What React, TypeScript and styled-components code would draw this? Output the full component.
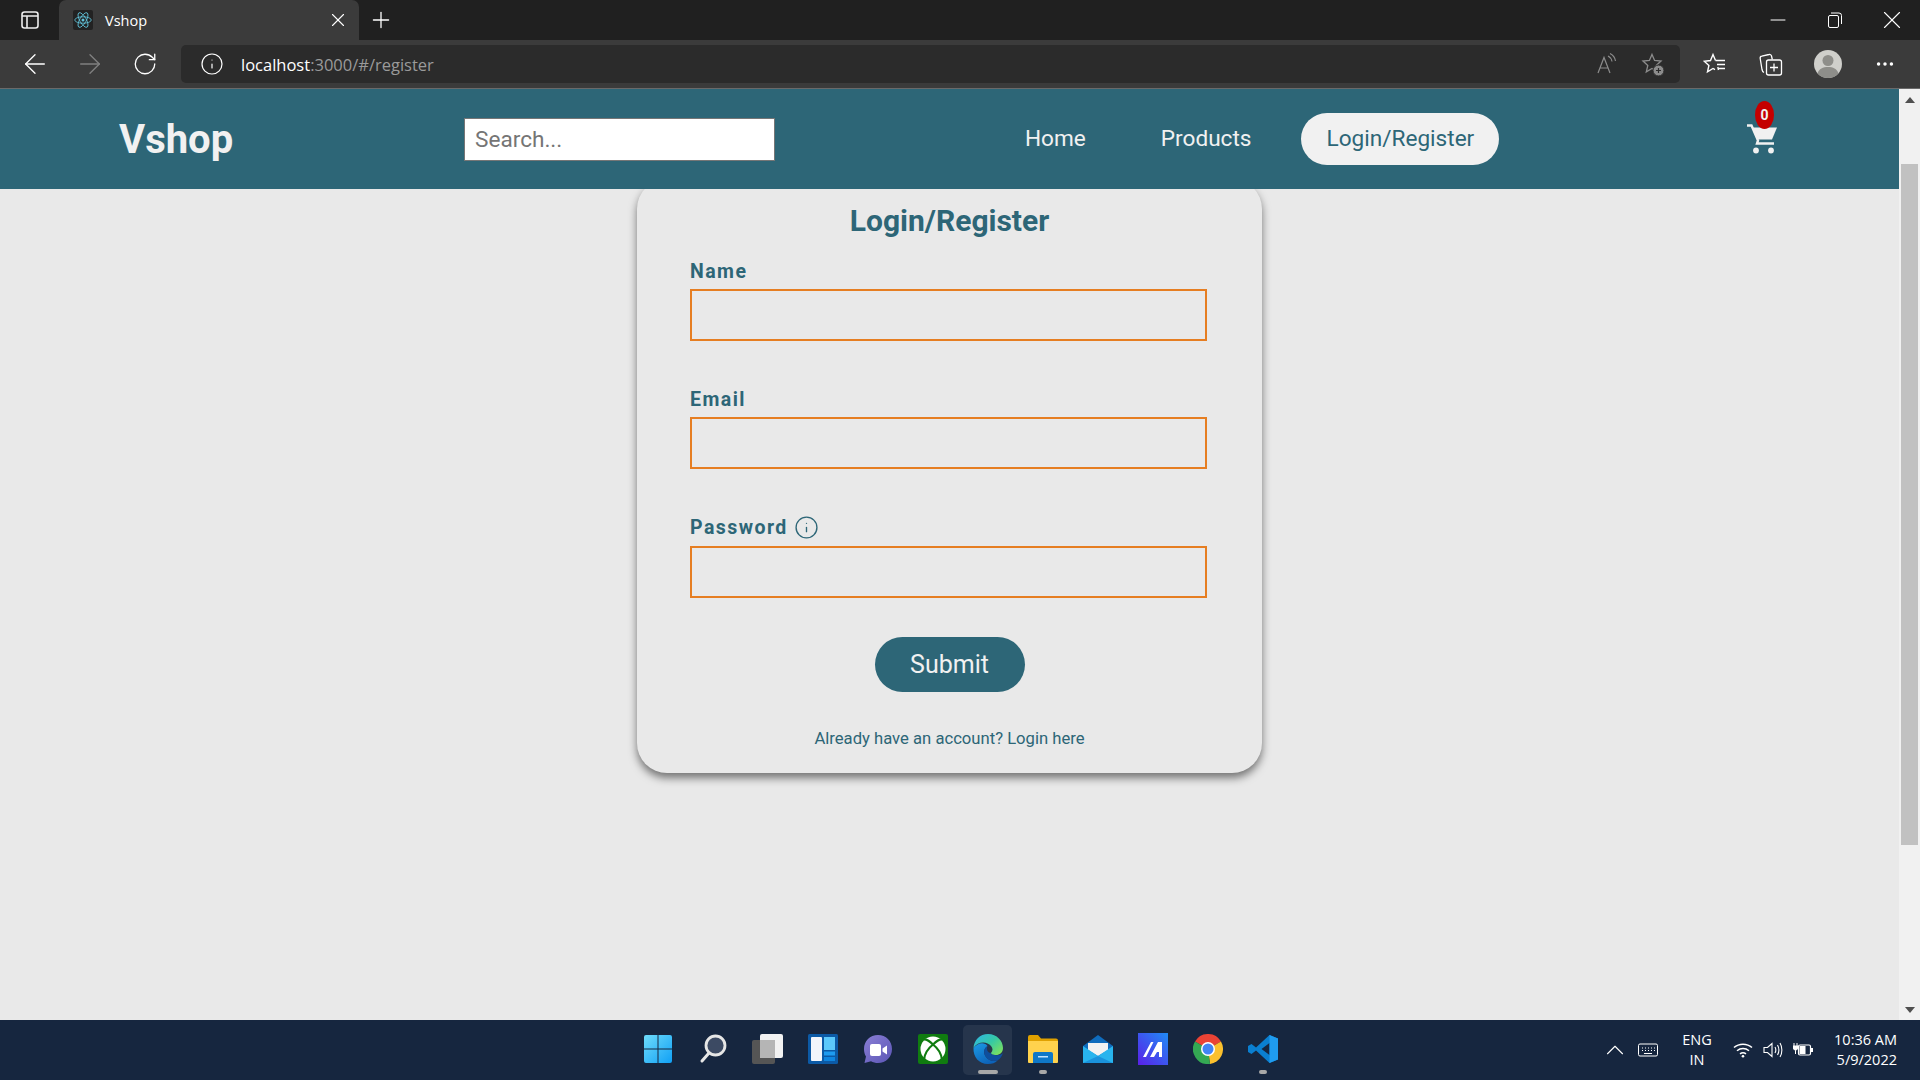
import React from "react";
import styled, { createGlobalStyle } from "styled-components";
import { ArrowLeft, ArrowRight, RotateCw, Info, X, Plus, Minus, ChevronUp, MoreHorizontal } from "lucide-react";

const GlobalStyle = createGlobalStyle`
  html, body {
    margin: 0;
    padding: 0;
    height: 100%;
    overflow: hidden;
    font-family: Roboto, "Liberation Sans", sans-serif;
  }
  * {
    box-sizing: border-box;
  }
`;

const Screen = styled.div`
  display: flex;
  flex-direction: column;
  width: 1920px;
  height: 1080px;
  overflow: hidden;
  background: #e9e9e9;
`;

// browser chrome
const TabStrip = styled.div`
  display: flex;
  align-items: stretch;
  height: 40px;
  flex-shrink: 0;
  background: #202020;
  color: #fff;
`;
const StripButton = styled.div<{ $width: number }>`
  display: flex;
  align-items: center;
  justify-content: center;
  width: ${(p) => p.$width}px;
  flex-shrink: 0;
`;
const Tab = styled.div`
  display: flex;
  align-items: center;
  width: 300px;
  padding: 0 10px 0 14px;
  background: #3b3b3b;
  border-radius: 7px 7px 0 0;
  font-family: "Open Sans", sans-serif;
  font-size: 14.5px;
`;
const TabTitle = styled.span`
  margin-left: 12px;
  flex: 1;
`;
const Favicon = styled.div`
  display: flex;
  align-items: center;
  justify-content: center;
  width: 20px;
  height: 20px;
  background: #222;
  border-radius: 2px;
`;
const StripSpacer = styled.div`
  flex: 1;
`;
const Toolbar = styled.div`
  display: flex;
  align-items: center;
  height: 49px;
  flex-shrink: 0;
  padding-left: 7px;
  background: #3b3b3b;
  border-bottom: 1px solid #6a6a6a;
  color: #fff;
`;
const ToolButton = styled.div<{ $width?: number; $dim?: boolean }>`
  display: flex;
  align-items: center;
  justify-content: center;
  width: ${(p) => p.$width ?? 55}px;
  flex-shrink: 0;
  color: ${(p) => (p.$dim ? "#808080" : "#fff")};
`;
const AddressBar = styled.div`
  display: flex;
  align-items: center;
  width: 1499px;
  height: 38px;
  margin: 0 7px 0 9px;
  padding: 0 5px 0 19px;
  background: #2b2b2b;
  border-radius: 5px;
  font-family: "Open Sans", sans-serif;
  font-size: 16.5px;
`;
const Host = styled.span`
  margin-left: 17px;
  color: #fff;
`;
const UrlRest = styled.span`
  flex: 1;
  color: #9a9a9a;
`;
const AddressIcon = styled.div`
  display: flex;
  justify-content: center;
  width: 45px;
  color: #8c8c8c;
`;

// page viewport
const Viewport = styled.div`
  display: flex;
  flex: 1;
  min-height: 0;
`;
const Page = styled.div`
  display: flex;
  flex-direction: column;
  flex: 1;
  min-width: 0;
`;
const Scrollbar = styled.div`
  display: flex;
  flex-direction: column;
  align-items: center;
  width: 21px;
  flex-shrink: 0;
  background: #f1f1f1;
`;
const ScrollArrow = styled.div<{ $down?: boolean }>`
  width: 0;
  height: 0;
  margin: ${(p) => (p.$down ? "auto 0 7px" : "8px 0 0")};
  border-left: 5px solid transparent;
  border-right: 5px solid transparent;
  border-${(p) => (p.$down ? "top" : "bottom")}: 6px solid #505050;
`;
const ScrollThumb = styled.div`
  width: 17px;
  height: 681px;
  margin-top: 61px;
  background: #c1c1c1;
`;

// app navbar
const Navbar = styled.nav`
  position: relative;
  z-index: 2;
  display: grid;
  grid-template-columns: 345px 536px 748px 1fr;
  align-items: center;
  height: 100px;
  flex-shrink: 0;
  padding-left: 119px;
  background: #2d6677;
`;
const Logo = styled.div`
  font-size: 40px;
  font-weight: 700;
  color: #f1f1f1;
`;
const SearchInput = styled.input`
  width: 311px;
  height: 43px;
  padding: 0 10px;
  border: 1px solid #767676;
  background: #fff;
  font-family: Roboto, sans-serif;
  font-size: 22.6px;
  outline: none;
  &::placeholder {
    color: #757575;
  }
`;
const NavLinks = styled.div`
  display: flex;
  gap: 25px;
`;
const NavLink = styled.a<{ $active?: boolean }>`
  padding: 0 25px;
  height: 52px;
  line-height: 52px;
  border-radius: 26px;
  font-size: 22.6px;
  color: ${(p) => (p.$active ? "#2d6677" : "#f1f1f1")};
  background: ${(p) => (p.$active ? "#f1f1f1" : "transparent")};
`;
const CartWrap = styled.div`
  position: relative;
  width: 30px;
  height: 30px;
  margin-left: -1px;
  color: #f1f1f1;
`;
const CartBadge = styled.span`
  position: absolute;
  top: -23px;
  left: 8px;
  width: 19px;
  height: 28px;
  border-radius: 50%;
  background: #c40000;
  color: #f1f1f1;
  font-size: 14px;
  font-weight: 700;
  line-height: 28px;
  text-align: center;
`;

// form card
const Card = styled.form`
  display: flex;
  flex-direction: column;
  align-self: center;
  width: 625px;
  margin-top: -10px;
  padding: 25px 53px 22px;
  background: #e9e9e9;
  border-radius: 30px;
  box-shadow: 0 5px 9px rgba(0, 0, 0, 0.5);
`;
const Title = styled.h2`
  margin: 0 0 21px;
  font-size: 30px;
  font-weight: 700;
  line-height: 34px;
  text-align: center;
  color: #2d6677;
`;
const Fields = styled.div`
  display: flex;
  flex-direction: column;
  gap: 46px;
`;
const Field = styled.div`
  display: flex;
  flex-direction: column;
`;
const Label = styled.label<{ $tall?: boolean }>`
  display: flex;
  align-items: center;
  gap: 6px;
  height: ${(p) => (p.$tall ? 25 : 24)}px;
  margin-bottom: 6px;
  font-size: 19.5px;
  font-weight: 700;
  letter-spacing: 1.45px;
  color: #2d6677;
`;
const TextInput = styled.input`
  width: 517px;
  height: 52px;
  padding: 0 10px;
  border: 2px solid #e67e22;
  background: transparent;
  outline: none;
`;
const SubmitButton = styled.button`
  align-self: center;
  width: 150px;
  height: 55px;
  margin-top: 39px;
  border: none;
  border-radius: 28px;
  background: #2d6677;
  color: #f1f1f1;
  font-family: Roboto, sans-serif;
  font-size: 25px;
`;
const Footnote = styled.p`
  margin: 35px 0 0;
  font-size: 16.65px;
  line-height: 24px;
  text-align: center;
  color: #2d6677;
`;

// windows taskbar
const Taskbar = styled.div`
  display: grid;
  grid-template-columns: 1fr auto 1fr;
  align-items: center;
  height: 60px;
  flex-shrink: 0;
  background: #16263f;
  color: #fff;
`;
const TaskIcons = styled.div`
  display: flex;
  grid-column: 2;
`;
const TaskIcon = styled.div<{ $active?: boolean }>`
  position: relative;
  display: flex;
  align-items: center;
  justify-content: center;
  width: 55px;
  height: 50px;
  border-radius: 5px;
  &::before {
    content: "";
    position: absolute;
    inset: 0 3px;
    border-radius: 5px;
    background: ${(p) => (p.$active ? "rgba(255,255,255,0.07)" : "transparent")};
  }
  & > svg {
    position: relative;
    margin-bottom: 2px;
  }
`;
const RunDot = styled.span<{ $wide?: boolean }>`
  position: absolute;
  bottom: 1px;
  left: 50%;
  width: ${(p) => (p.$wide ? 20 : 8)}px;
  height: 4px;
  margin-left: ${(p) => (p.$wide ? -10 : -4)}px;
  border-radius: 2px;
  background: #a8a8a8;
`;
const Tray = styled.div`
  display: flex;
  align-items: center;
  justify-content: flex-end;
  padding-right: 23px;
  font-family: "Open Sans", sans-serif;
  font-size: 14.5px;
`;
const TrayIcon = styled.div<{ $width: number }>`
  display: flex;
  justify-content: center;
  width: ${(p) => p.$width}px;
`;
const Lang = styled.div`
  width: 62px;
  line-height: 20px;
  text-align: center;
`;
const Clock = styled.div`
  width: 78px;
  margin-left: 1px;
  line-height: 20px;
  text-align: right;
  white-space: nowrap;
`;

const ReactLogo = () => (
  <svg width="18" height="18" viewBox="-12 -12 24 24" fill="none" stroke="#61c3da" strokeWidth="1.1">
    <circle r="2" fill="#61c3da" stroke="none" />
    <ellipse rx="11" ry="4.3" />
    <ellipse rx="11" ry="4.3" transform="rotate(60)" />
    <ellipse rx="11" ry="4.3" transform="rotate(120)" />
  </svg>
);

const SidebarIcon = () => (
  <svg width="20" height="20" viewBox="0 0 20 20" fill="none" stroke="#eee" strokeWidth="1.6">
    <rect x="2" y="2" width="16" height="16" rx="2.5" />
    <path d="M2 6h16M7 6v12" />
  </svg>
);

const RestoreIcon = () => (
  <svg width="14" height="16" viewBox="0 0 14 16" fill="none" stroke="#fff" strokeWidth="1">
    <rect x="0.5" y="3.5" width="10" height="12" rx="1.5" />
    <path d="M3 1h8a2.5 2.5 0 0 1 2.5 2.5V12" />
  </svg>
);

const ReadAloudIcon = () => (
  <svg width="22" height="22" viewBox="0 0 22 22" fill="none" stroke="#8c8c8c" strokeWidth="1.2">
    <path d="M1 20 7 4.500 13 20M3 15h8" />
    <path d="M11 3c2 1 3.500 3 4 5.500M13 0.500c3 1.500 5 4 5.500 7.500" />
  </svg>
);

const FavAddIcon = () => (
  <svg width="24" height="24" viewBox="0 0 24 24" fill="none" stroke="#8c8c8c" strokeWidth="1.3">
    <path d="M11 2.500 13.600 8.500 20 9.100 15.200 13.400 16.700 19.800 11 16.400 5.300 19.800 6.800 13.400 2 9.100 8.400 8.500Z" />
    <circle cx="17.500" cy="18.500" r="5.500" fill="#8c8c8c" stroke="#2b2b2b" strokeWidth="1" />
    <path d="M17.500 16v5M15 18.500h5" stroke="#2b2b2b" strokeWidth="1.200" />
  </svg>
);

const FavoritesIcon = () => (
  <svg width="24" height="24" viewBox="0 0 24 24" fill="none" stroke="#fff" strokeWidth="1.4">
    <path d="M12.500 8.500 10 2.500 7.500 8.500 1.200 9.200 5.900 13.400 4.500 19.800 10 16.500 12 17.700" />
    <path d="M12.500 8.500H22M14 12.500h8M14.500 16.500h7.500M14.800 15l.7 3" />
  </svg>
);

const CollectionsIcon = () => (
  <svg width="24" height="26" viewBox="0 0 24 26" fill="none" stroke="#fff" strokeWidth="1.3">
    <path d="M5 21.500C3.500 21 3.200 19.500 3 18.500L1.200 7.500A2 2 0 0 1 2.800 5.200L10 3.500a2 2 0 0 1 2.500 1.500l.8 3.500" />
    <rect x="7.500" y="9" width="15" height="15" rx="2" />
    <path d="M15 12.500v8M11 16.500h8" />
  </svg>
);

const ProfileIcon = () => (
  <svg width="28" height="34" viewBox="0 0 28 28">
    <circle cx="14" cy="14" r="14" fill="#cfcfcb" />
    <circle cx="14" cy="10.500" r="5.500" fill="#8e8e8a" />
    <path d="M3.500 23.500C5 18.500 9 17 14 17s9 1.500 10.500 6.500A14 14 0 0 1 14 28a14 14 0 0 1-10.500-4.500z" fill="#8e8e8a" />
  </svg>
);

const CartIcon = () => (
  <svg width="30" height="30" viewBox="0 0 30 30" fill="currentColor">
    <path d="M6 3.500H30L25 15.500H10Z" />
    <path d="M0 1.500H4.500L11 16.500 10 19.500H27" fill="none" stroke="currentColor" strokeWidth="2.400" />
    <circle cx="9" cy="26.500" r="2.900" />
    <circle cx="24" cy="26.500" r="2.900" />
  </svg>
);

const WindowsIcon = () => (
  <svg width="30" height="30" viewBox="0 0 30 30">
    <defs>
      <linearGradient id="win" x1="0" y1="0" x2="1" y2="1">
        <stop offset="0" stopColor="#6fdcfb" />
        <stop offset="1" stopColor="#10a0f5" />
      </linearGradient>
    </defs>
    <path d="M1 3a2 2 0 0 1 2-2h11.500v13.500H1zM15.500 1H27a2 2 0 0 1 2 2v11.500H15.500zM1 15.500h13.500V29H3a2 2 0 0 1-2-2zM15.500 15.500H29V27a2 2 0 0 1-2 2H15.500z" fill="url(#win)" />
  </svg>
);

const SearchGlassIcon = () => (
  <svg width="28" height="30" viewBox="0 0 28 30" fill="none">
    <circle cx="16.500" cy="11.500" r="9.500" fill="#3c4a63" stroke="#e6e6e6" strokeWidth="2.800" />
    <path d="M10 19 3 27" stroke="#e6e6e6" strokeWidth="3" strokeLinecap="round" />
  </svg>
);

const TaskViewIcon = () => (
  <svg width="32" height="30" viewBox="0 0 32 30">
    <rect x="0" y="6" width="23" height="24" rx="2" fill="#555" />
    <rect x="8" y="0" width="23" height="24" rx="2" fill="#f2f2f2" />
    <rect x="8" y="6" width="15" height="18" fill="#b5b5b5" />
  </svg>
);

const WidgetsIcon = () => (
  <svg width="30" height="30" viewBox="0 0 30 30">
    <rect width="30" height="30" rx="1.500" fill="#0c5aa6" />
    <rect x="3" y="3" width="11" height="24" rx="1" fill="#f2f6fb" />
    <rect x="16" y="3" width="11" height="13" fill="#5cc9fb" />
    <rect x="16" y="17.500" width="11" height="4" fill="#1e9cf0" />
    <rect x="16" y="23" width="11" height="4" fill="#0f86e0" />
  </svg>
);

const ChatIcon = () => (
  <svg width="30" height="30" viewBox="0 0 30 30">
    <defs>
      <linearGradient id="chat" x1="0" y1="0" x2="1" y2="1">
        <stop offset="0" stopColor="#8a7fd6" />
        <stop offset="1" stopColor="#5b55b5" />
      </linearGradient>
    </defs>
    <path d="M15 1C7 1 1 7 1 15c0 3 .8 5.500 2 7.500L1.500 29 8 27.200c2 1 4.500 1.800 7 1.800 8 0 14-6 14-14S23 1 15 1z" fill="url(#chat)" />
    <rect x="7" y="10" width="11" height="12" rx="2" fill="#fff" />
    <path d="M19.500 14.500 24 11.500v9l-4.500-3z" fill="#fff" />
  </svg>
);

const XboxIcon = () => (
  <svg width="30" height="30" viewBox="0 0 30 30">
    <rect width="30" height="30" rx="2" fill="#107c10" />
    <circle cx="15" cy="15" r="12.500" fill="#fff" />
    <g fill="none" stroke="#107c10" strokeWidth="2.200">
      <path d="M15 10.500C12 7.500 8.500 4.500 5 5.500" />
      <path d="M15 10.500C18 7.500 21.500 4.500 25 5.500" />
      <path d="M15 10.500C10.500 14 6.500 20 6 26" />
      <path d="M15 10.500C19.500 14 23.500 20 24 26" />
    </g>
  </svg>
);

const EdgeIcon = () => (
  <svg width="30" height="30" viewBox="0 0 30 30">
    <defs>
      <linearGradient id="edgeA" x1="0" y1="0" x2="1" y2="0.8">
        <stop offset="0" stopColor="#2fb4ea" />
        <stop offset="0.55" stopColor="#35c9a5" />
        <stop offset="1" stopColor="#7be05f" />
      </linearGradient>
      <linearGradient id="edgeB" x1="0" y1="0" x2="0.6" y2="1">
        <stop offset="0" stopColor="#1c9be6" />
        <stop offset="1" stopColor="#0d62b8" />
      </linearGradient>
    </defs>
    <path d="M0.500 14C1 6 7 0 15 0 24 0 30 7 30 14 30 19 26 21.500 22 21 19 21 18 20 18 19 20 17 20 14 18 12 14 7 5 7 0.500 14Z" fill="url(#edgeA)" />
    <path d="M0.500 14C5 8 12 8 14.500 12 11 14 10 19 13 23 16 27 21 28 25 26 22 29 19 30 15 30 6 30 0 23 0.500 14Z" fill="url(#edgeB)" />
    <path d="M14.500 12C11 14 10 19 13 23 16 27 21 28 25 26 27 25 29 22 30 19 28 21 25 21.500 22 21 19 21 18 20 18 19 15 19 13 16 14.500 12Z" fill="#0e4f9e" />
  </svg>
);

const ExplorerIcon = () => (
  <svg width="30" height="30" viewBox="0 0 30 30">
    <path d="M0 3a2 2 0 0 1 2-2h8l3 3.500h15a2 2 0 0 1 2 2V10H0z" fill="#e0a100" />
    <path d="M0 7h30v21a1 1 0 0 1-1 1H1a1 1 0 0 1-1-1z" fill="#ffd24d" />
    <path d="M5 20a2 2 0 0 1 2-2h16a2 2 0 0 1 2 2v9H5z" fill="#0f78c8" />
    <rect x="10" y="22" width="10" height="1.500" fill="#bfe3ff" />
  </svg>
);

const MailIcon = () => (
  <svg width="30" height="30" viewBox="0 0 30 30">
    <path d="M15 1 30 12v17H0V12z" fill="#0f6cbd" />
    <path d="M5 9h20v7l-10 6-10-6z" fill="#f2f2f2" />
    <path d="M0 12 15 22l15-10v17H0z" fill="#28b4ee" />
    <path d="M0 29 15 22l15 7z" fill="#1a92dc" />
  </svg>
);

const AppAIcon = () => (
  <svg width="30" height="32" viewBox="0 0 30 32">
    <defs>
      <linearGradient id="appA" x1="0" y1="1" x2="1" y2="0">
        <stop offset="0" stopColor="#5a1fe8" />
        <stop offset="1" stopColor="#1f8cf5" />
      </linearGradient>
    </defs>
    <rect width="30" height="32" fill="url(#appA)" />
    <path d="M5 24 13 9h2.500L8 24zM12 24 20 9h4v15h-3v-5h-2l-3 5z" fill="#fff" />
  </svg>
);

const ChromeIcon = () => (
  <svg width="30" height="30" viewBox="-15 -15 30 30">
    <path d="M0 0-13-7.500A15 15 0 0 1 13-7.500Z" fill="#ea4335" />
    <path d="M0 0 13-7.500A15 15 0 0 1 2 14.900Z" fill="#fbc02d" />
    <path d="M0 0 2 14.900A15 15 0 0 1-13-7.500Z" fill="#34a853" />
    <circle r="7" fill="#fff" />
    <circle r="5.500" fill="#4285f4" />
  </svg>
);

const VsCodeIcon = () => (
  <svg width="30" height="30" viewBox="0 0 30 30">
    <path d="M21.500 1 8 13.500 3.500 10 0 12v6l3.500 2L8 16.500 21.500 29 30 25.500V4.500ZM21.500 9V21L13.500 15Z" fill="#0a7fd0" fillRule="evenodd" />
    <path d="M21.500 1 30 4.500V25.500L21.500 29Z" fill="#1f9cf0" />
  </svg>
);

const KeyboardIcon = () => (
  <svg width="20" height="14" viewBox="0 0 20 14" fill="none" stroke="#fff" strokeWidth="1">
    <rect x="0.500" y="1" width="19" height="12" rx="1.500" />
    <path d="M4 5h1M7 5h1M10 5h1M13 5h1M16 5h1M4 7.500h1M7 7.500h1M10 7.500h1M13 7.500h1M16 7.500h1M6 10.500h8" />
  </svg>
);

const WifiIcon = () => (
  <svg width="20" height="16" viewBox="0 0 20 16" fill="none" stroke="#fff" strokeWidth="1.500">
    <path d="M1 5.500c5-4.500 13-4.500 18 0M4 8.800c3.500-3 8.500-3 12 0M7 11.800c2-1.500 4-1.500 6 0" />
    <circle cx="10" cy="14.300" r="1.300" fill="#fff" stroke="none" />
  </svg>
);

const SpeakerIcon = () => (
  <svg width="21" height="16" viewBox="0 0 21 16" fill="none" stroke="#fff" strokeWidth="1.100">
    <path d="M1 5.500h3.500L9 1.500v13l-4.500-4H1z" />
    <path d="M12 5c1 1.800 1 4.200 0 6M14.500 3c1.700 3 1.700 7 0 10M17 1c2.500 4 2.500 10 0 14" />
  </svg>
);

const BatteryIcon = () => (
  <svg width="20" height="16" viewBox="0 0 20 16" fill="none">
    <rect x="5.500" y="3" width="12" height="10" rx="1.500" stroke="#fff" strokeWidth="1.200" />
    <rect x="6.500" y="4" width="6" height="8" fill="#fff" />
    <rect x="18" y="6" width="2" height="4" fill="#fff" />
    <path d="M1 1v3M4 1v3M0 4h5v2.500L2.500 8.500 0 6.500zM2.500 8.500V12" stroke="#fff" strokeWidth="1" fill="#fff" />
  </svg>
);

const taskItems = [
  { key: "start", icon: <WindowsIcon /> },
  { key: "search", icon: <SearchGlassIcon /> },
  { key: "taskview", icon: <TaskViewIcon /> },
  { key: "widgets", icon: <WidgetsIcon /> },
  { key: "chat", icon: <ChatIcon /> },
  { key: "xbox", icon: <XboxIcon /> },
  { key: "edge", icon: <EdgeIcon />, active: true },
  { key: "explorer", icon: <ExplorerIcon />, running: true },
  { key: "mail", icon: <MailIcon /> },
  { key: "app", icon: <AppAIcon /> },
  { key: "chrome", icon: <ChromeIcon /> },
  { key: "vscode", icon: <VsCodeIcon />, running: true },
];

const fields = ["Name", "Email", "Password"];

const App: React.FC = () => {
  return (
    <Screen>
      <GlobalStyle />
      <TabStrip>
        <StripButton $width={59}>
          <SidebarIcon />
        </StripButton>
        <Tab>
          <Favicon>
            <ReactLogo />
          </Favicon>
          <TabTitle>Vshop</TabTitle>
          <X size={22} strokeWidth={1.2} />
        </Tab>
        <StripButton $width={43}>
          <Plus size={26} strokeWidth={1.2} />
        </StripButton>
        <StripSpacer />
        <StripButton $width={57}>
          <Minus size={24} strokeWidth={1} />
        </StripButton>
        <StripButton $width={57}>
          <RestoreIcon />
        </StripButton>
        <StripButton $width={57}>
          <X size={30} strokeWidth={0.9} />
        </StripButton>
      </TabStrip>

      <Toolbar>
        <ToolButton>
          <ArrowLeft size={32} strokeWidth={1} />
        </ToolButton>
        <ToolButton $dim>
          <ArrowRight size={32} strokeWidth={1} />
        </ToolButton>
        <ToolButton>
          <RotateCw size={26} strokeWidth={1.2} />
        </ToolButton>
        <AddressBar>
          <Info size={24} strokeWidth={1.2} />
          <Host>localhost</Host>
          <UrlRest>:3000/#/register</UrlRest>
          <AddressIcon>
            <ReadAloudIcon />
          </AddressIcon>
          <AddressIcon>
            <FavAddIcon />
          </AddressIcon>
        </AddressBar>
        <ToolButton $width={56}>
          <FavoritesIcon />
        </ToolButton>
        <ToolButton $width={56}>
          <CollectionsIcon />
        </ToolButton>
        <ToolButton $width={58}>
          <ProfileIcon />
        </ToolButton>
        <ToolButton $width={56}>
          <MoreHorizontal size={22} strokeWidth={1.8} />
        </ToolButton>
      </Toolbar>

      <Viewport>
        <Page>
          <Navbar>
            <Logo>Vshop</Logo>
            <SearchInput placeholder="Search..." />
            <NavLinks>
              <NavLink>Home</NavLink>
              <NavLink>Products</NavLink>
              <NavLink $active>Login/Register</NavLink>
            </NavLinks>
            <CartWrap>
              <CartIcon />
              <CartBadge>0</CartBadge>
            </CartWrap>
          </Navbar>

          <Card>
            <Title>Login/Register</Title>
            <Fields>
              {fields.map((name) => (
                <Field key={name}>
                  <Label $tall={name === "Password"}>
                    {name}
                    {name === "Password" && <Info size={25} strokeWidth={1.3} />}
                  </Label>
                  <TextInput type={name === "Password" ? "password" : "text"} />
                </Field>
              ))}
            </Fields>
            <SubmitButton type="button">Submit</SubmitButton>
            <Footnote>Already have an account? Login here</Footnote>
          </Card>
        </Page>
        <Scrollbar>
          <ScrollArrow />
          <ScrollThumb />
          <ScrollArrow $down />
        </Scrollbar>
      </Viewport>

      <Taskbar>
        <TaskIcons>
          {taskItems.map((item) => (
            <TaskIcon key={item.key} $active={item.active}>
              {item.icon}
              {item.active && <RunDot $wide />}
              {item.running && <RunDot />}
            </TaskIcon>
          ))}
        </TaskIcons>
        <Tray>
          <TrayIcon $width={30}>
            <ChevronUp size={30} strokeWidth={0.9} />
          </TrayIcon>
          <TrayIcon $width={36}>
            <KeyboardIcon />
          </TrayIcon>
          <Lang>
            ENG
            <br />
            IN
          </Lang>
          <TrayIcon $width={30}>
            <WifiIcon />
          </TrayIcon>
          <TrayIcon $width={30}>
            <SpeakerIcon />
          </TrayIcon>
          <TrayIcon $width={30}>
            <BatteryIcon />
          </TrayIcon>
          <Clock>
            10:36 AM
            <br />
            5/9/2022
          </Clock>
        </Tray>
      </Taskbar>
    </Screen>
  );
};

export default App;
